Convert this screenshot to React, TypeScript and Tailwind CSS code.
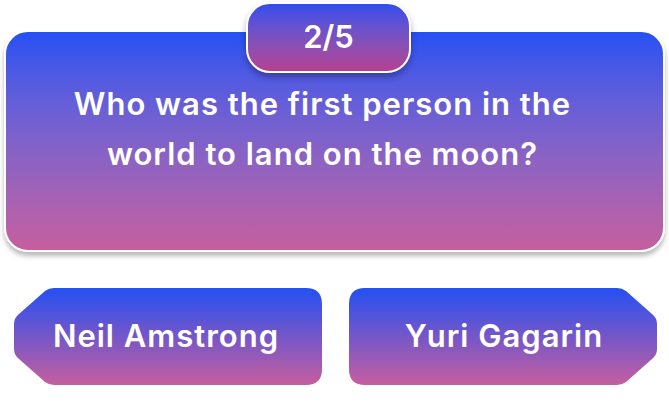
import React from 'react';

const font = { fontFamily: 'Inter, "Open Sans", sans-serif' };

const AnswerShape: React.FC<{ id: string; flip?: boolean }> = ({ id, flip }) => (
  <svg
    className="absolute inset-0"
    width="308"
    height="97"
    viewBox="0 0 308 97"
    style={flip ? { transform: 'scaleX(-1)' } : undefined}
  >
    <defs>
      <linearGradient id={id} x1="0" y1="0" x2="0" y2="1">
        <stop offset="0" stopColor="#2450f2" />
        <stop offset="1" stopColor="#c65e9e" />
      </linearGradient>
    </defs>
    <path
      d="M40 0 H292 Q308 0 308 16 V81 Q308 97 292 97 H40 Q35 97 31 94 L5 71 Q0 67 0 61 V36 Q0 30 5 26 L31 3 Q35 0 40 0 Z"
      fill={`url(#${id})`}
    />
  </svg>
);

const Answer: React.FC<{ label: string; flip?: boolean; id: string; textClass: string }> = ({
  label,
  flip,
  id,
  textClass,
}) => (
  <button className="relative w-[308px] h-[97px] shrink-0 cursor-pointer">
    <AnswerShape id={id} flip={flip} />
    <span
      className={`relative flex h-full items-center text-[31px] font-semibold text-white tracking-[1px] ${textClass}`}
      style={font}
    >
      {label}
    </span>
  </button>
);

export default function App() {
  return (
    <div className="w-[669px] h-[411px] bg-white overflow-hidden" style={font}>
      {/* Question card */}
      <div className="relative pt-[30px] px-[4px]">
        <div className="h-[222px] rounded-[24px] border-2 border-white bg-gradient-to-b from-[#2450f2] to-[#c65e9e] shadow-[0_4px_5px_rgba(0,0,0,0.28)] flex justify-center pt-[47px] pr-[24px]">
          <p className="w-[560px] text-center text-[31px] leading-[50px] tracking-[1px] font-semibold text-white">
            Who was the first person in the world to land on the moon?
          </p>
        </div>

        {/* Counter badge */}
        <div className="absolute left-[246px] top-[2px] w-[165px] h-[71px] rounded-[24px] border-2 border-white bg-gradient-to-b from-[#2f4cee] to-[#b53f90] shadow-[0_4px_6px_rgba(0,0,0,0.3)] flex items-center justify-center">
          <span className="text-[31px] font-semibold text-white">2/5</span>
        </div>
      </div>

      {/* Answers */}
      <div className="flex mt-[36px] pl-[14px] gap-[27px]">
        <Answer id="ga" label="Neil Amstrong" textClass="justify-center pr-[4px]" />
        <Answer id="gb" label="Yuri Gagarin" flip textClass="justify-center pl-[2px]" />
      </div>
    </div>
  );
}
